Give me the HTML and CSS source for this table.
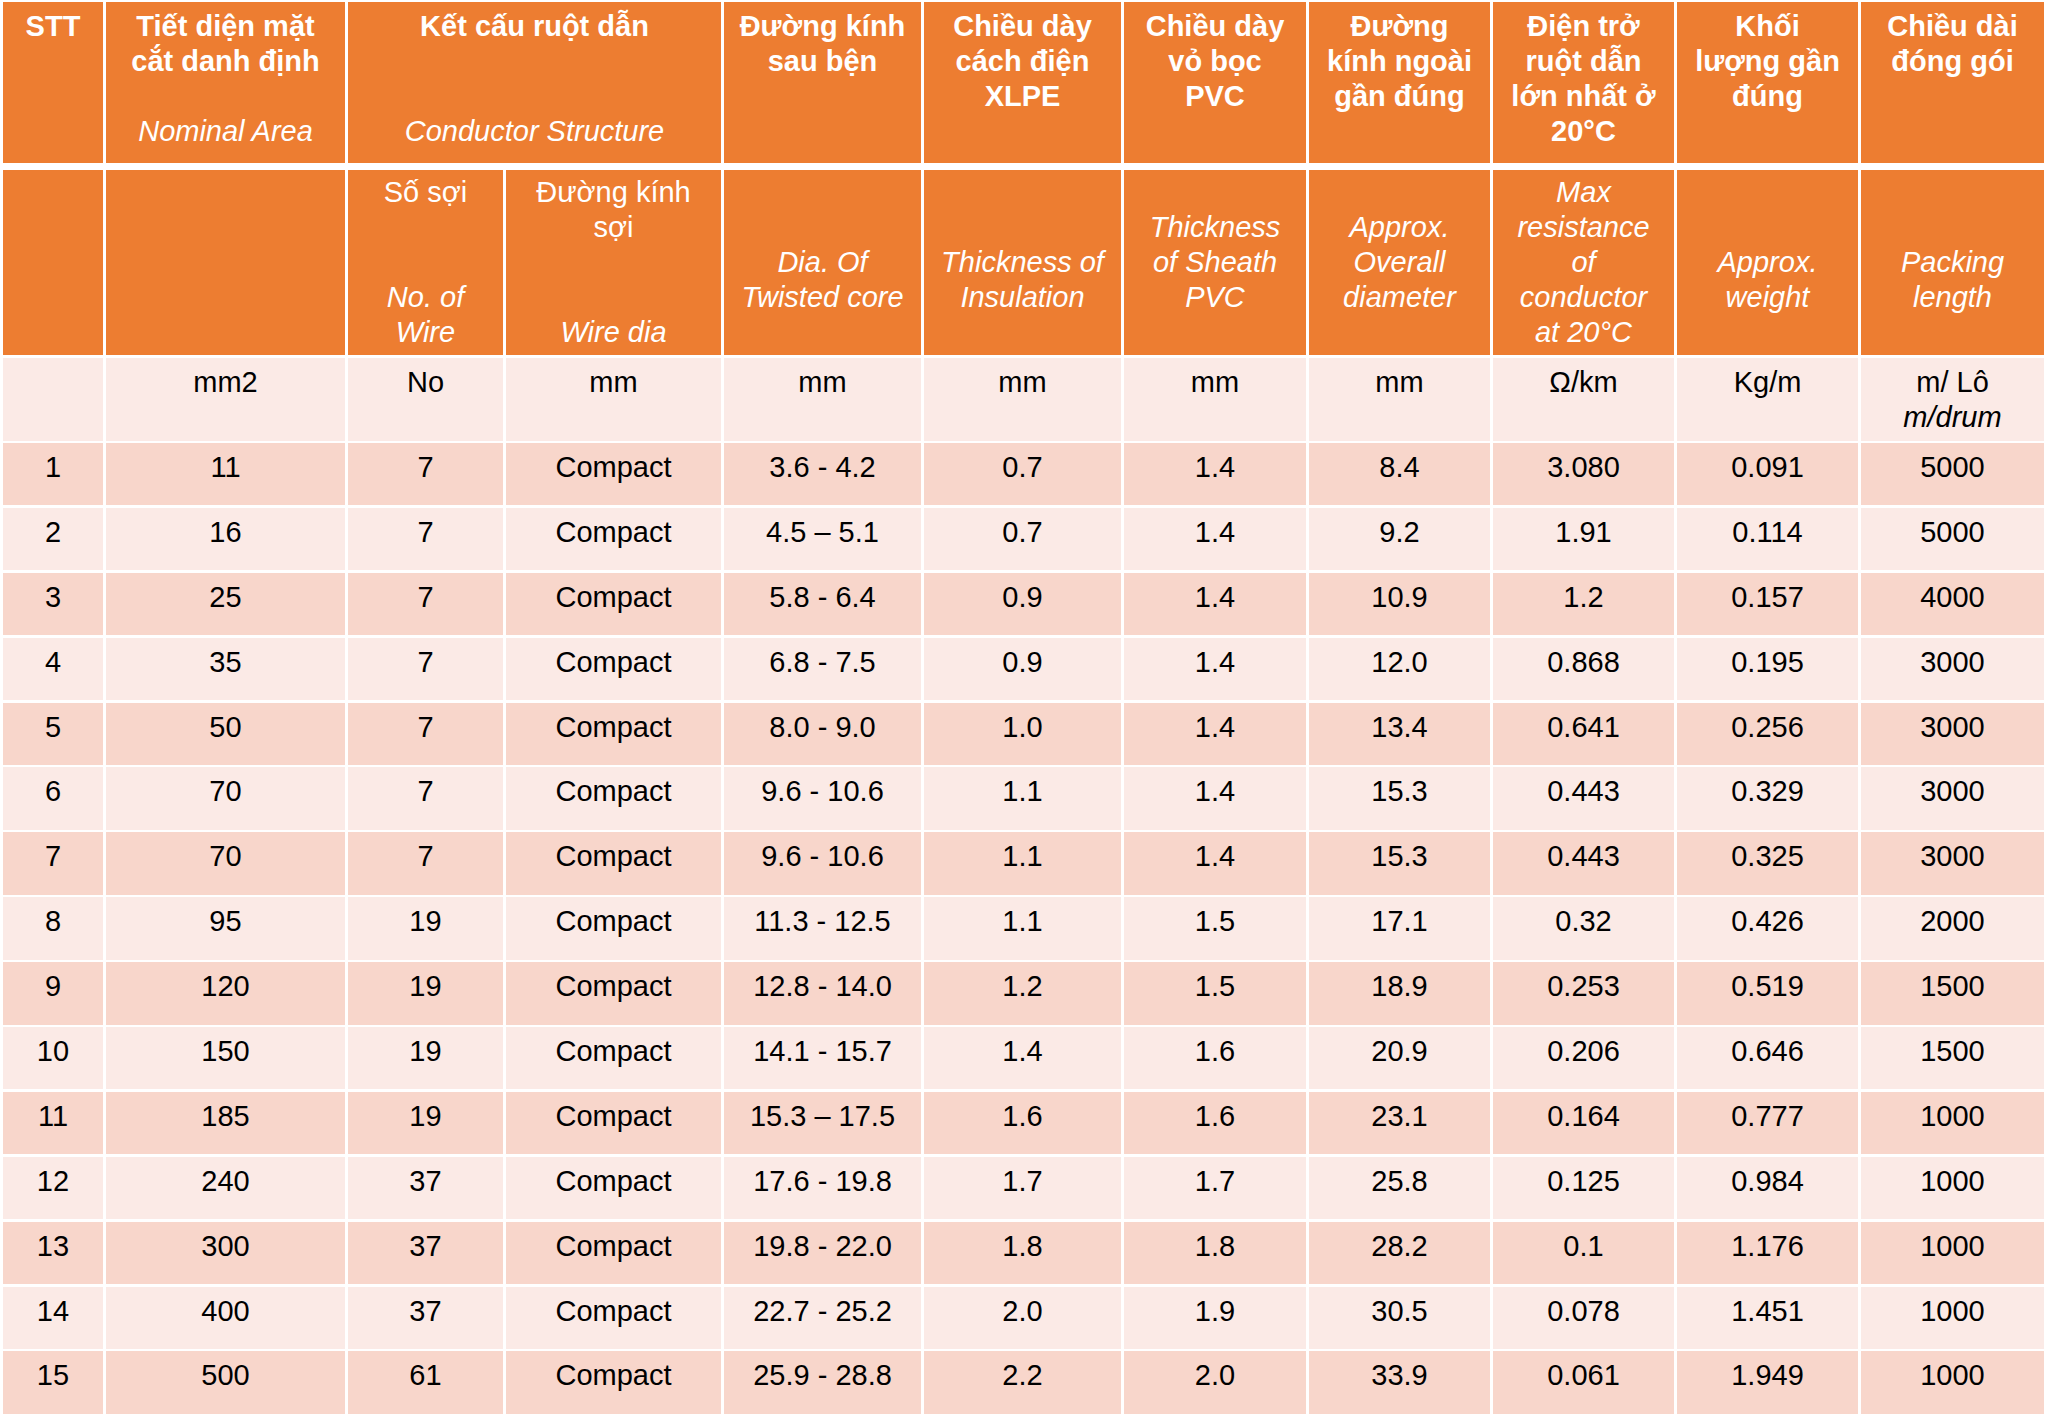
FILE: index.html
```html
<!DOCTYPE html>
<html lang="vi">
<head>
<meta charset="utf-8">
<title>Bảng thông số cáp</title>
<link rel="stylesheet" href="styles.css">
</head>
<body>
<div class="table">
  <div class="h1">STT</div>
  <div class="h1">Tiết diện mặt<br>cắt danh định<br><br><span class="en">Nominal Area</span></div>
  <div class="h1 span2">Kết cấu ruột dẫn<br><br><br><span class="en">Conductor Structure</span></div>
  <div class="h1">Đường kính<br>sau bện</div>
  <div class="h1">Chiều dày<br>cách điện<br>XLPE</div>
  <div class="h1">Chiều dày<br>vỏ bọc<br>PVC</div>
  <div class="h1">Đường<br>kính ngoài<br>gần đúng</div>
  <div class="h1">Điện trở<br>ruột dẫn<br>lớn nhất ở<br>20°C</div>
  <div class="h1">Khối<br>lượng gần<br>đúng</div>
  <div class="h1">Chiều dài<br>đóng gói</div>

  <div class="h2"></div>
  <div class="h2"></div>
  <div class="h2">Số sợi<br><br><br><span class="en">No. of<br>Wire</span></div>
  <div class="h2">Đường kính<br>sợi<br><br><br><span class="en">Wire dia</span></div>
  <div class="h2"><br><br><span class="en">Dia. Of<br>Twisted core</span></div>
  <div class="h2"><br><br><span class="en">Thickness of<br>Insulation</span></div>
  <div class="h2"><br><span class="en">Thickness<br>of Sheath<br>PVC</span></div>
  <div class="h2"><br><span class="en">Approx.<br>Overall<br>diameter</span></div>
  <div class="h2"><span class="en">Max<br>resistance<br>of<br>conductor<br>at 20°C</span></div>
  <div class="h2"><br><br><span class="en">Approx.<br>weight</span></div>
  <div class="h2"><br><br><span class="en">Packing<br>length</span></div>

  <div class="c light"></div>
  <div class="c light">mm2</div>
  <div class="c light">No</div>
  <div class="c light">mm</div>
  <div class="c light">mm</div>
  <div class="c light">mm</div>
  <div class="c light">mm</div>
  <div class="c light">mm</div>
  <div class="c light">Ω/km</div>
  <div class="c light">Kg/m</div>
  <div class="c light">m/ Lô<br><span class="it">m/drum</span></div>

  <div class="c dark">1</div><div class="c dark">11</div><div class="c dark">7</div><div class="c dark">Compact</div><div class="c dark">3.6 - 4.2</div><div class="c dark">0.7</div><div class="c dark">1.4</div><div class="c dark">8.4</div><div class="c dark">3.080</div><div class="c dark">0.091</div><div class="c dark">5000</div>
  <div class="c light">2</div><div class="c light">16</div><div class="c light">7</div><div class="c light">Compact</div><div class="c light">4.5 – 5.1</div><div class="c light">0.7</div><div class="c light">1.4</div><div class="c light">9.2</div><div class="c light">1.91</div><div class="c light">0.114</div><div class="c light">5000</div>
  <div class="c dark">3</div><div class="c dark">25</div><div class="c dark">7</div><div class="c dark">Compact</div><div class="c dark">5.8 - 6.4</div><div class="c dark">0.9</div><div class="c dark">1.4</div><div class="c dark">10.9</div><div class="c dark">1.2</div><div class="c dark">0.157</div><div class="c dark">4000</div>
  <div class="c light">4</div><div class="c light">35</div><div class="c light">7</div><div class="c light">Compact</div><div class="c light">6.8 - 7.5</div><div class="c light">0.9</div><div class="c light">1.4</div><div class="c light">12.0</div><div class="c light">0.868</div><div class="c light">0.195</div><div class="c light">3000</div>
  <div class="c dark">5</div><div class="c dark">50</div><div class="c dark">7</div><div class="c dark">Compact</div><div class="c dark">8.0 - 9.0</div><div class="c dark">1.0</div><div class="c dark">1.4</div><div class="c dark">13.4</div><div class="c dark">0.641</div><div class="c dark">0.256</div><div class="c dark">3000</div>
  <div class="c light">6</div><div class="c light">70</div><div class="c light">7</div><div class="c light">Compact</div><div class="c light">9.6 - 10.6</div><div class="c light">1.1</div><div class="c light">1.4</div><div class="c light">15.3</div><div class="c light">0.443</div><div class="c light">0.329</div><div class="c light">3000</div>
  <div class="c dark">7</div><div class="c dark">70</div><div class="c dark">7</div><div class="c dark">Compact</div><div class="c dark">9.6 - 10.6</div><div class="c dark">1.1</div><div class="c dark">1.4</div><div class="c dark">15.3</div><div class="c dark">0.443</div><div class="c dark">0.325</div><div class="c dark">3000</div>
  <div class="c light">8</div><div class="c light">95</div><div class="c light">19</div><div class="c light">Compact</div><div class="c light">11.3 - 12.5</div><div class="c light">1.1</div><div class="c light">1.5</div><div class="c light">17.1</div><div class="c light">0.32</div><div class="c light">0.426</div><div class="c light">2000</div>
  <div class="c dark">9</div><div class="c dark">120</div><div class="c dark">19</div><div class="c dark">Compact</div><div class="c dark">12.8 - 14.0</div><div class="c dark">1.2</div><div class="c dark">1.5</div><div class="c dark">18.9</div><div class="c dark">0.253</div><div class="c dark">0.519</div><div class="c dark">1500</div>
  <div class="c light">10</div><div class="c light">150</div><div class="c light">19</div><div class="c light">Compact</div><div class="c light">14.1 - 15.7</div><div class="c light">1.4</div><div class="c light">1.6</div><div class="c light">20.9</div><div class="c light">0.206</div><div class="c light">0.646</div><div class="c light">1500</div>
  <div class="c dark">11</div><div class="c dark">185</div><div class="c dark">19</div><div class="c dark">Compact</div><div class="c dark">15.3 – 17.5</div><div class="c dark">1.6</div><div class="c dark">1.6</div><div class="c dark">23.1</div><div class="c dark">0.164</div><div class="c dark">0.777</div><div class="c dark">1000</div>
  <div class="c light">12</div><div class="c light">240</div><div class="c light">37</div><div class="c light">Compact</div><div class="c light">17.6 - 19.8</div><div class="c light">1.7</div><div class="c light">1.7</div><div class="c light">25.8</div><div class="c light">0.125</div><div class="c light">0.984</div><div class="c light">1000</div>
  <div class="c dark">13</div><div class="c dark">300</div><div class="c dark">37</div><div class="c dark">Compact</div><div class="c dark">19.8 - 22.0</div><div class="c dark">1.8</div><div class="c dark">1.8</div><div class="c dark">28.2</div><div class="c dark">0.1</div><div class="c dark">1.176</div><div class="c dark">1000</div>
  <div class="c light">14</div><div class="c light">400</div><div class="c light">37</div><div class="c light">Compact</div><div class="c light">22.7 - 25.2</div><div class="c light">2.0</div><div class="c light">1.9</div><div class="c light">30.5</div><div class="c light">0.078</div><div class="c light">1.451</div><div class="c light">1000</div>
  <div class="c dark">15</div><div class="c dark">500</div><div class="c dark">61</div><div class="c dark">Compact</div><div class="c dark">25.9 - 28.8</div><div class="c dark">2.2</div><div class="c dark">2.0</div><div class="c dark">33.9</div><div class="c dark">0.061</div><div class="c dark">1.949</div><div class="c dark">1000</div>
</div>
</body>
</html>
```

FILE: styles.css
```css
html, body {
  margin: 0;
  padding: 0;
  background: #ffffff;
}

body {
  font-family: "Liberation Sans", Arial, sans-serif;
  font-size: 29px;
  line-height: 35px;
}

.table {
  display: grid;
  grid-template-columns: 100px 239px 155px 215px 197px 197px 182px 181px 181px 181px 183px;
  grid-template-rows: 165.5px 185px 83px repeat(15, 62.4px);
  column-gap: 3px;
  row-gap: 2.5px;
  margin: 2px 0 0 3px;
  width: 2041px;
}

.table > div {
  text-align: center;
  white-space: nowrap;
  box-sizing: border-box;
}

.h1 {
  background: #ed7d31;
  color: #ffffff;
  font-weight: bold;
  padding-top: 6.5px;
  margin-bottom: 4.5px;
}

.span2 {
  grid-column: span 2;
}

.h2 {
  background: #ed7d31;
  color: #ffffff;
  padding-top: 5px;
}

.en {
  font-style: italic;
  font-weight: normal;
}

.it {
  font-style: italic;
}

.c {
  color: #000000;
  padding-top: 7px;
}

.light {
  background: #fbeae6;
}

.dark {
  background: #f8d6cb;
}
```
